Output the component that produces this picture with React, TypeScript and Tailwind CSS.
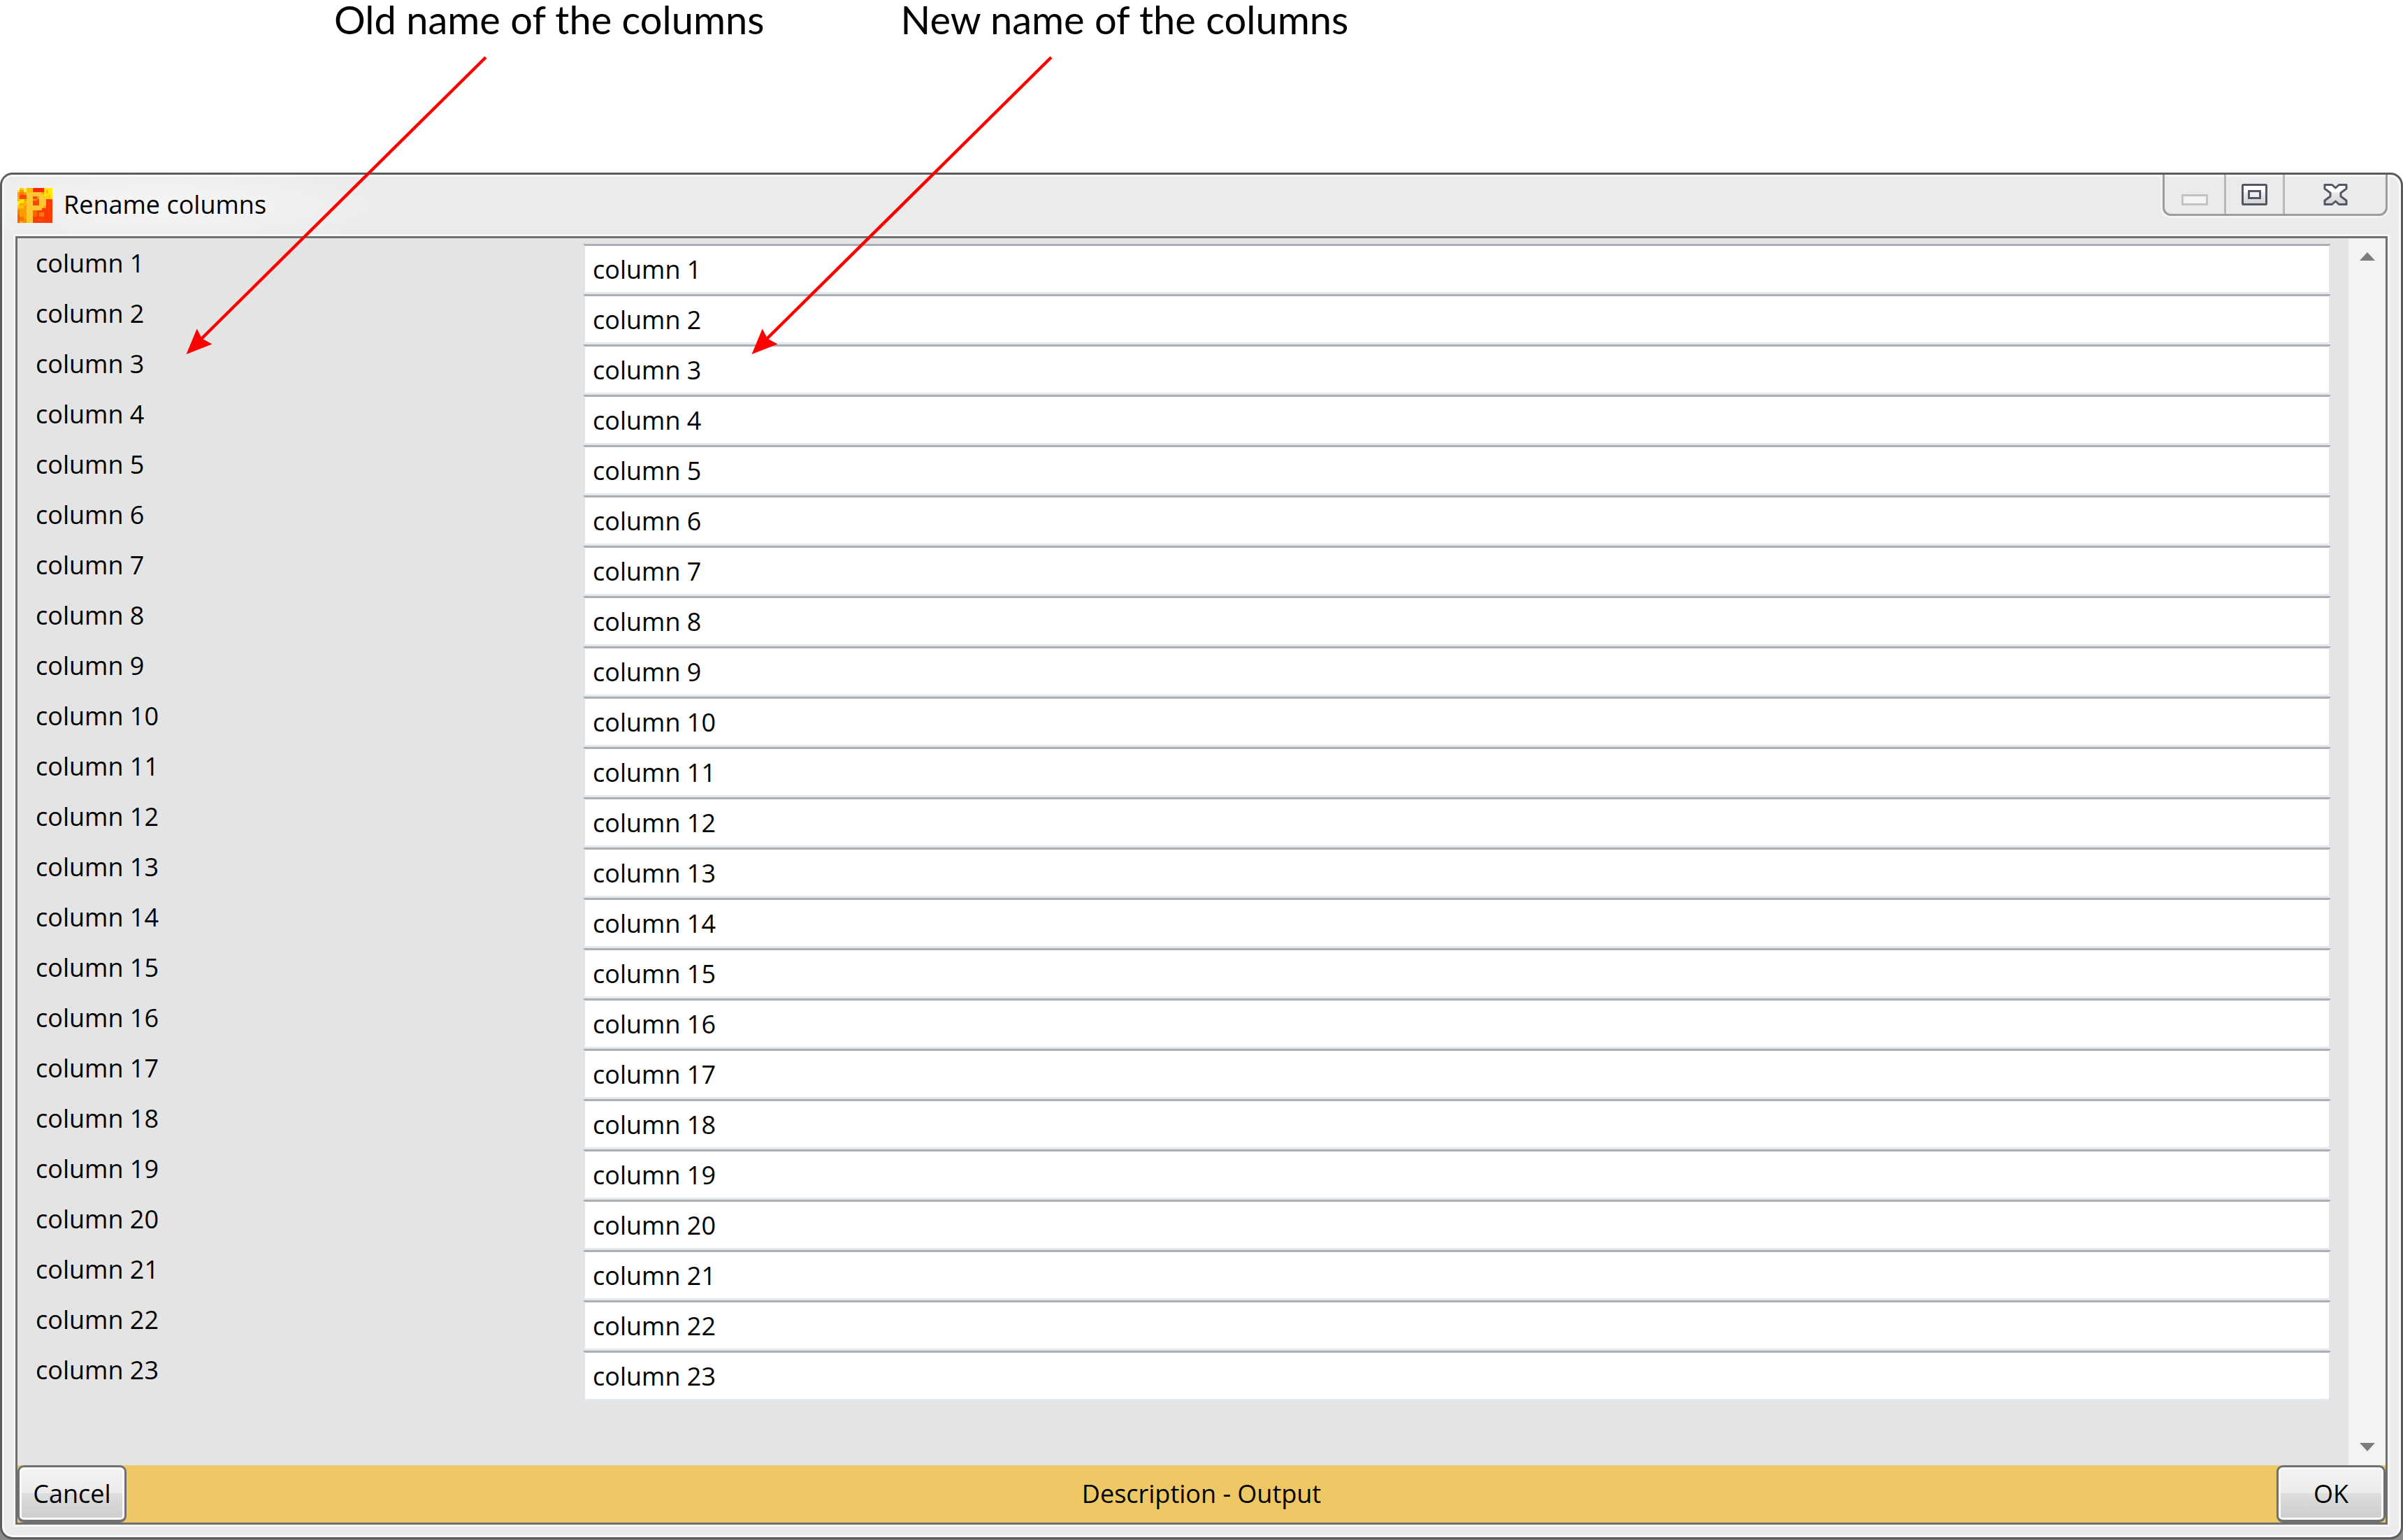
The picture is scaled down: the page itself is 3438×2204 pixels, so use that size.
import React from "react";

const columns = Array.from({ length: 23 }, (_, i) => `column ${i + 1}`);

const logoPatches: [number, number, number, number, string][] = [
  [0, 0, 50, 50, "#ff9c00"],
  [0, 0, 3, 3, "#fffbd0"],
  [3, 0, 6, 3, "#ffc814"],
  [9, 0, 4, 6, "#fff25a"],
  [13, 0, 9, 6, "#ffc000"],
  [22, 0, 16, 6, "#ff2a00"],
  [38, 0, 12, 16, "#ffe400"],
  [41, 3, 3, 5, "#ffb400"],
  [44, 0, 6, 7, "#fff000"],
  [41, 10, 6, 6, "#ffd000"],
  [0, 3, 3, 3, "#ffe41e"],
  [3, 6, 6, 4, "#ff7a00"],
  [3, 10, 10, 6, "#ff4600"],
  [0, 13, 3, 6, "#ffb400"],
  [3, 16, 7, 6, "#ffe600"],
  [0, 19, 3, 6, "#fff000"],
  [9, 19, 4, 6, "#ffb400"],
  [0, 25, 9, 4, "#ffc400"],
  [0, 32, 3, 6, "#ff7800"],
  [0, 38, 3, 12, "#ff5a00"],
  [3, 41, 6, 6, "#ff7000"],
  [9, 44, 4, 6, "#ff8c00"],
  [41, 16, 9, 34, "#ff3c00"],
  [22, 29, 28, 21, "#ff3c00"],
  [22, 32, 6, 9, "#ff6400"],
  [31, 35, 7, 6, "#ff7800"],
  [28, 44, 7, 3, "#ff5000"],
];

function Logo() {
  return (
    <svg width="50" height="50" viewBox="0 0 50 50" aria-hidden="true" shapeRendering="crispEdges">
      {logoPatches.map(([x, y, w, h, fill], i) => (
        <rect key={i} x={x} y={y} width={w} height={h} fill={fill} />
      ))}
      <path d="M13 6H35V9H38V12H41V25H38V28H35V32H22V50H13Z" fill="#ffc830" />
      <path d="M22 12H28V16H31V25H22Z" fill="#ff4600" />
      <path d="M28 12H31V16H28ZM22 16H28V18H22Z" fill="#ff9c14" />
    </svg>
  );
}

function WindowButtons() {
  return (
    <div className="flex h-[59px] rounded-b-[12px] border-x-[3px] border-b-[3px] border-[#9d9d9d] shadow-[0_0_0_3px_#f4f4f4] [clip-path:inset(0_-3px_-3px_-3px)]">
      <button aria-label="Minimize" className="flex w-[85px] items-start justify-center border-t-[3px] border-[#f8f8f8] pt-[25px]">
        <svg width="38" height="16" viewBox="0 0 38 16" aria-hidden="true">
          <rect x="1.5" y="1.5" width="35" height="13" fill="#f4f4f4" stroke="#c2c2c2" strokeWidth="3" />
        </svg>
      </button>
      <button aria-label="Maximize" className="flex w-[84px] items-start justify-center border-l-[3px] border-l-[#b8b8b8] pt-[13px]">
        <svg width="37" height="31" viewBox="0 0 37 31" aria-hidden="true">
          <defs>
            <linearGradient id="glyph" x1="0" y1="0" x2="0" y2="1">
              <stop offset="0.35" stopColor="#ffffff" />
              <stop offset="0.4" stopColor="#ebebeb" />
              <stop offset="1" stopColor="#d2d2d2" />
            </linearGradient>
          </defs>
          <rect x="1.5" y="1.5" width="34" height="28" rx="1" fill="url(#glyph)" stroke="#535666" strokeWidth="3" />
          <rect x="10.5" y="10.5" width="16" height="10" fill="#eeeeee" stroke="#535666" strokeWidth="3" />
        </svg>
      </button>
      <button aria-label="Close" className="flex w-[147px] items-start justify-center border-l-[3px] border-l-[#b8b8b8] pt-[13px]">
        <svg width="35" height="31" viewBox="0 0 35 31" aria-hidden="true">
          <path
            d="M2 1.500H12.500L17.500 6L22.500 1.500H33V7L25 13V18L33 24V29.500H22.500L17.500 25L12.500 29.500H2V24L10 18V13L2 7Z"
            fill="url(#glyph)"
            stroke="#535666"
            strokeWidth="3"
            strokeLinejoin="round"
          />
        </svg>
      </button>
    </div>
  );
}

function DialogButton({ children }: { children: React.ReactNode }) {
  return (
    <button className="h-[82px] w-[156px] rounded-[9px] border-[3px] border-b-4 border-[#707070] bg-[linear-gradient(#f3f3f3,#ebebeb_50%,#dddddd_50%,#cdcdcd)] shadow-[inset_0_0_0_3px_#fafafa]">
      {children}
    </button>
  );
}

function ScrollArrow({ d, label }: { d: string; label: string }) {
  return (
    <button aria-label={label} className="flex h-[52px] w-full items-center justify-center">
      <svg width="22" height="12" viewBox="0 0 22 12" aria-hidden="true">
        <path d={d} fill="#7c7c7c" />
      </svg>
    </button>
  );
}

export default function App() {
  return (
    <div className="relative flex min-h-screen flex-col bg-white font-['Open_Sans','Noto_Sans',sans-serif] text-[36px] leading-[48px] text-black">
      <header className="flex h-[247px] gap-[195px] pl-[478px] font-['Lato','Open_Sans',sans-serif] text-[56px] leading-[56px] whitespace-nowrap">
        <p>Old name of the columns</p>
        <p>New name of the columns</p>
      </header>

      <div className="flex flex-1 flex-col bg-[linear-gradient(#ffffff,#8c8c8c)] pb-px">
        <section className="flex flex-1 flex-col rounded-[18px] border-[3px] border-[#5c5c5c] bg-[#ebebeb] shadow-[inset_0_0_0_3px_#f9f9f9]">
          <div className="flex h-[85px] items-start justify-between bg-[radial-gradient(ellipse_360px_60px_at_230px_44px,#f6f6f6,transparent)] pr-[19px] pl-[22px]">
            <div className="flex gap-[16px] pt-[19px]">
              <Logo />
              <h1>Rename columns</h1>
            </div>
            <WindowButtons />
          </div>

          <div className="mx-[16px] mb-[15px] flex flex-1 flex-col border-[3px] border-[#f6f6f6]">
            <div className="flex flex-1 flex-col border-[3px] border-[#707070] bg-[#e4e4e4]">
              <main className="flex flex-1">
                <div className="flex-1 pt-[8px] pr-[25px]">
                  {columns.map((name, i) => (
                    <div key={name} className="grid grid-cols-[809px_1fr]">
                      <label htmlFor={`name-${i}`} className="pt-[4px] pl-[26px]">
                        {name}
                      </label>
                      <input
                        id={`name-${i}`}
                        defaultValue={name}
                        className="h-[72px] w-full border-[3px] border-[#e2e3ea] border-t-[#abadb3] border-b-[#e3e9ef] bg-white pl-[11px] outline-none"
                      />
                    </div>
                  ))}
                </div>
                <div className="flex w-[53px] flex-col justify-between bg-[#f3f3f3]">
                  <ScrollArrow label="Scroll up" d="M0 12L11 0L22 12Z" />
                  <ScrollArrow label="Scroll down" d="M0 0H22L11 12Z" />
                </div>
              </main>
              <footer className="flex items-center justify-between bg-[#edc864]">
                <DialogButton>Cancel</DialogButton>
                <p>Description - Output</p>
                <DialogButton>OK</DialogButton>
              </footer>
            </div>
          </div>
        </section>
      </div>

      <svg className="pointer-events-none absolute top-0 left-0" width="1600" height="520" viewBox="0 0 1600 520" aria-hidden="true">
        <g id="arrow" fill="#ff0000">
          <path d="M695 82L286 487" stroke="#ff0000" strokeWidth="4.500" />
          <path d="M266.500 507L281.700 470.500L289 484.500L303.500 492.500Z" />
        </g>
        <use href="#arrow" x="809" />
      </svg>
    </div>
  );
}
